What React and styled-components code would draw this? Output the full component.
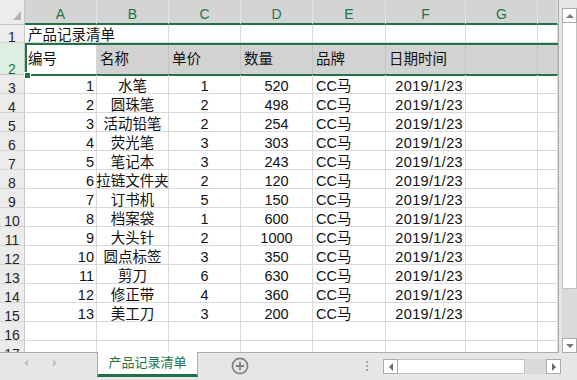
import React from "react";
import styled, { createGlobalStyle } from "styled-components";

const GREEN = "#217346";
const GRID = "#d9d9d9";
const TRACKS = "25px 72px 72px 72px 72px 73px 80px 72px 20px";
const LETTERS = ["A", "B", "C", "D", "E", "F", "G", ""];

const items = [
  [1, "水笔", 1, 520],
  [2, "圆珠笔", 2, 498],
  [3, "活动铅笔", 2, 254],
  [4, "荧光笔", 3, 303],
  [5, "笔记本", 3, 243],
  [6, "拉链文件夹", 2, 120],
  [7, "订书机", 5, 150],
  [8, "档案袋", 1, 600],
  [9, "大头针", 2, 1000],
  [10, "圆点标签", 3, 350],
  [11, "剪刀", 6, 630],
  [12, "修正带", 4, 360],
  [13, "美工刀", 3, 200],
];

const titles = ["编号", "名称", "单价", "数量", "品牌", "日期时间", "", ""];

export default function App() {
  return (
    <>
      <GlobalStyle />
      <Window>
        <Top>
          <Sheet>
            <HeadRow>
              <Corner>
                <CornerMark />
              </Corner>
              {LETTERS.map((l, i) => (
                <ColHead key={i}>{l}</ColHead>
              ))}
            </HeadRow>

            <Row $h={18}>
              <RowHead>1</RowHead>
              <Cell>产品记录清单</Cell>
              {Array.from({ length: 7 }).map((_, i) => (
                <Cell key={i} />
              ))}
            </Row>

            <Row $h={32} $selected>
              <RowHead $active>2</RowHead>
              {titles.map((t, i) => (
                <Cell key={i} $middle $shade={i > 0}>
                  {t}
                </Cell>
              ))}
              <Handle />
            </Row>

            {items.map((it, i) => (
              <Row key={i} $h={19}>
                <RowHead>{i + 3}</RowHead>
                <Cell $align="right">{it[0]}</Cell>
                <Cell $align="center">{it[1]}</Cell>
                <Cell $align="center">{it[2]}</Cell>
                <Cell $align="center">{it[3]}</Cell>
                <Cell>CC马</Cell>
                <Cell $align="right" $date>
                  2019/1/23
                </Cell>
                <Cell />
                <Cell />
              </Row>
            ))}

            {[16, 17].map((n) => (
              <Row key={n} $h={19}>
                <RowHead>{n}</RowHead>
                {Array.from({ length: 8 }).map((_, i) => (
                  <Cell key={i} />
                ))}
              </Row>
            ))}
          </Sheet>

          <VScroll>
            <ScrollBtn>
              <Arrow $dir="up" />
            </ScrollBtn>
            <VThumb />
            <VTrack />
            <ScrollBtn>
              <Arrow $dir="down" />
            </ScrollBtn>
          </VScroll>
        </Top>

        <TabBar>
          <Nav>
            <Arrow $dir="left" $light />
            <Arrow $dir="right" $light />
          </Nav>
          <Tab>产品记录清单</Tab>
          <AddSheet>
            <svg width="18" height="18" viewBox="0 0 18 18">
              <circle cx="9" cy="9" r="7.6" fill="none" stroke="#7f7f7f" strokeWidth="1.6" />
              <path d="M9 4.8v8.4M4.8 9h8.4" stroke="#7f7f7f" strokeWidth="1.8" />
            </svg>
          </AddSheet>
          <Dots>
            <i />
            <i />
            <i />
          </Dots>
          <HScroll>
            <ScrollBtn $h>
              <Arrow $dir="left" />
            </ScrollBtn>
            <HThumb />
            <HTrack />
            <ScrollBtn $h>
              <Arrow $dir="right" />
            </ScrollBtn>
          </HScroll>
        </TabBar>
      </Window>
    </>
  );
}

/*--- STYLING ---*/

const GlobalStyle = createGlobalStyle`
  html, body {
    margin: 0;
    padding: 0;
    background: #e6e6e6;
  }
  body {
    font-family: "Liberation Sans", "Noto Sans CJK SC", sans-serif;
  }
`;

const Window = styled.div`
  width: 577px;
  height: 380px;
  display: flex;
  flex-direction: column;
  background: #e6e6e6;
  overflow: hidden;
`;

const Top = styled.div`
  display: flex;
  height: 353px;
`;

const Sheet = styled.div`
  width: 559px;
  height: 353px;
  box-sizing: border-box;
  border-right: 1px solid #ababab;
  border-bottom: 1px solid #ababab;
  background: #fff;
  overflow: hidden;
`;

const HeadRow = styled.div`
  display: grid;
  grid-template-columns: ${TRACKS};
  height: 25px;
`;

const Corner = styled.div`
  position: relative;
  background: #ececec;
  border-right: 1px solid #c6c6c6;
  border-bottom: 1px solid #c6c6c6;
`;

const CornerMark = styled.span`
  position: absolute;
  right: 3px;
  bottom: 4px;
  width: 0;
  height: 0;
  border-left: 8px solid transparent;
  border-bottom: 9px solid #b4b4b4;
`;

const ColHead = styled.div`
  box-sizing: border-box;
  background: #d4d4d4;
  border-right: 1px solid #e2e2e2;
  border-bottom: 2px solid ${GREEN};
  color: ${GREEN};
  font-size: 14px;
  line-height: 16px;
  padding-top: 6px;
  text-align: center;
`;

const Row = styled.div`
  position: relative;
  display: grid;
  grid-template-columns: ${TRACKS};
  height: ${(p) => p.$h}px;

  ${(p) =>
    p.$selected &&
    `
    &::after {
      content: "";
      position: absolute;
      top: 0;
      left: 25px;
      right: 0;
      bottom: -1px;
      border: 2px solid ${GREEN};
      border-right: none;
      pointer-events: none;
    }
  `}
`;

const RowHead = styled.div`
  display: flex;
  align-items: flex-end;
  justify-content: center;
  box-sizing: border-box;
  background: ${(p) => (p.$active ? "#dcefe3" : "#ececec")};
  color: ${(p) => (p.$active ? GREEN : "#262626")};
  border-right: 1px solid #c6c6c6;
  border-bottom: 1px solid ${(p) => (p.$active ? "#c6c6c6" : "#d6d6d6")};
  font-size: 14px;
  line-height: 10px;
`;

const Cell = styled.div`
  display: flex;
  align-items: ${(p) => (p.$middle ? "center" : "flex-end")};
  justify-content: ${(p) =>
    p.$align === "right" ? "flex-end" : p.$align === "center" ? "center" : "flex-start"};
  box-sizing: border-box;
  padding: 0 ${(p) => (p.$align === "right" ? "2px" : "0")} 0
    ${(p) => (p.$align === "right" || p.$align === "center" ? "0" : "3px")};
  background: ${(p) => (p.$shade ? "#d2d2d2" : "transparent")};
  border-right: 1px solid ${(p) => (p.$shade ? "#c4c4c4" : GRID)};
  border-bottom: 1px solid ${GRID};
  color: #111;
  font-size: 14.5px;
  line-height: 14px;
  letter-spacing: ${(p) => (p.$date ? "0.35px" : "0")};
  white-space: nowrap;
`;

const Handle = styled.span`
  position: absolute;
  left: 24px;
  bottom: -4px;
  width: 5px;
  height: 5px;
  background: ${GREEN};
  border: 1px solid #fff;
  z-index: 2;
`;

const VScroll = styled.div`
  display: flex;
  flex-direction: column;
  width: 18px;
  padding-left: 3px;
  box-sizing: border-box;
  padding-top: 8px;
`;

const ScrollBtn = styled.div`
  display: flex;
  align-items: center;
  justify-content: center;
  width: 15px;
  height: 15px;
  box-sizing: border-box;
  background: #fff;
  border: 1px solid #ababab;
  flex: none;
`;

const VThumb = styled.div`
  width: 15px;
  height: 266px;
  box-sizing: border-box;
  background: #fff;
  border: 1px solid #c2c2c2;
  border-top: none;
`;

const VTrack = styled.div`
  width: 15px;
  height: 49px;
  background: #dadada;
`;

const Arrow = styled.span`
  width: 0;
  height: 0;
  flex: none;
  ${(p) =>
    p.$dir === "up"
      ? `border-left: 4px solid transparent; border-right: 4px solid transparent; border-bottom: 4px solid #7a7a7a;`
      : p.$dir === "down"
      ? `border-left: 4px solid transparent; border-right: 4px solid transparent; border-top: 4px solid #7a7a7a;`
      : p.$dir === "left"
      ? `border-top: 4px solid transparent; border-bottom: 4px solid transparent; border-right: 4px solid ${
          p.$light ? "#c4c4c4" : "#6a6a6a"
        };`
      : `border-top: 4px solid transparent; border-bottom: 4px solid transparent; border-left: 4px solid ${
          p.$light ? "#c4c4c4" : "#6a6a6a"
        };`}
`;

const TabBar = styled.div`
  display: flex;
  align-items: flex-start;
  height: 27px;
  background: #e6e6e6;
`;

const Nav = styled.div`
  display: flex;
  align-items: center;
  gap: 25px;
  width: 97px;
  box-sizing: border-box;
  padding-left: 24px;
  height: 17px;
  padding-top: 2px;
`;

const Tab = styled.div`
  margin-top: -1px;
  width: 101px;
  height: 25px;
  box-sizing: border-box;
  background: #fff;
  border-left: 1px solid #ababab;
  border-right: 1px solid #ababab;
  border-bottom: 3px solid ${GREEN};
  color: ${GREEN};
  font-size: 13px;
  line-height: 20px;
  padding-top: 1px;
  text-align: center;
`;

const AddSheet = styled.div`
  margin-left: 33px;
  margin-top: 4px;
  width: 18px;
  height: 18px;
  display: flex;
`;

const Dots = styled.div`
  display: flex;
  flex-direction: column;
  gap: 2px;
  margin-left: 117px;
  margin-top: 8px;

  i {
    display: block;
    width: 2px;
    height: 2px;
    background: #a6a6a6;
  }
`;

const HScroll = styled.div`
  display: flex;
  margin-left: 15px;
  margin-top: 6px;
  height: 15px;
`;

const HThumb = styled.div`
  width: 127px;
  height: 15px;
  box-sizing: border-box;
  background: #fff;
  border: 1px solid #c2c2c2;
  border-left: none;
`;

const HTrack = styled.div`
  width: 21px;
  height: 15px;
  background: #dadada;
`;
